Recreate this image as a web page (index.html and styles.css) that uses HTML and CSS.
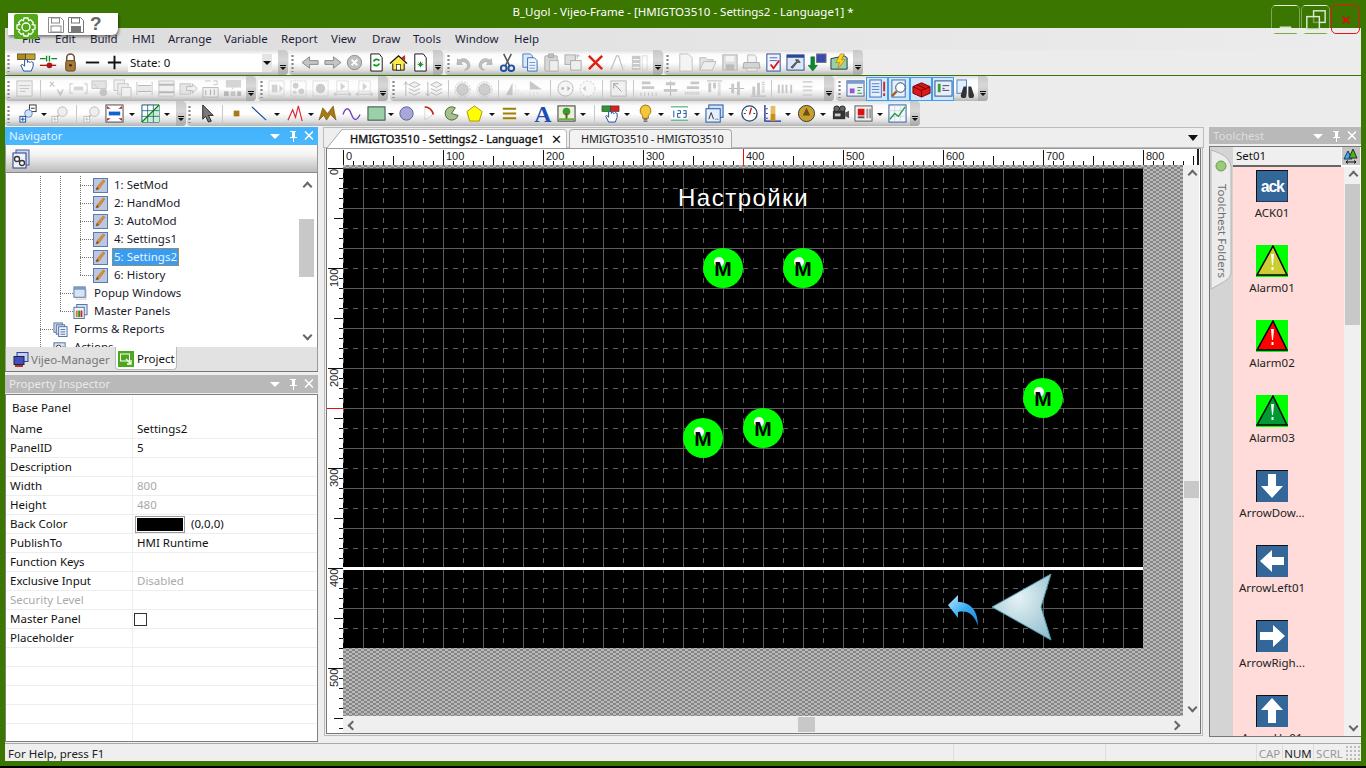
FILE: index.html
```html
<!DOCTYPE html>
<html lang="en">
<head>
<meta charset="utf-8">
<title>B_Ugol - Vijeo-Frame</title>
<link rel="stylesheet" href="styles.css">
</head>
<body>
<svg class="defs" aria-hidden="true">
<defs>
<symbol id="phi" viewBox="0 0 48 14"><path d="M5 5h10l-5 5z" fill="#fff"/><path d="M25 2h6v1h-1v5h2v1h-3v4h-1V9h-3V8h2V3h-2z" fill="#fff"/><path d="M40 2.500l8 8M48 2.500l-8 8" stroke="#fff" stroke-width="1.500"/></symbol>
<symbol id="hand" viewBox="0 0 20 20"><rect x="0" y="1" width="9" height="6" fill="#b08a18" stroke="#333" stroke-width=".7"/><rect x="9" y="1" width="10" height="6" fill="#c8a028" stroke="#333" stroke-width=".7"/><path d="M8 7v7L6 12l-2 1 3 6h8l2-5v-4l-2-1-1 1-2-1-1 1V7z" fill="#fff" stroke="#1c4f9c"/></symbol>
<symbol id="sw" viewBox="0 0 20 20"><path d="M1 6h6M13 6h6M8 3v6M11 3v6" stroke="#0a8a20" stroke-width="1.400" fill="none"/><path d="M1 13h17" stroke="#b01414" stroke-width="1.400"/><circle cx="11" cy="13" r="3" fill="#b01414"/></symbol>
<symbol id="lock" viewBox="0 0 20 20"><path d="M6 9V5a4 4 0 018 0v4" fill="none" stroke="#6a5030" stroke-width="1.600"/><rect x="5" y="8" width="10" height="11" rx="2" fill="#a87838" stroke="#5a4020"/><circle cx="10" cy="13" r="1.500" fill="#3a2810"/></symbol>
<symbol id="minus" viewBox="0 0 20 20"><path d="M3 10h14" stroke="#111" stroke-width="2"/></symbol>
<symbol id="plus" viewBox="0 0 20 20"><path d="M3 10h14M10 3v14" stroke="#111" stroke-width="2"/></symbol>
<symbol id="al" viewBox="0 0 20 20"><path d="M1 10l8-6v4h9v4H9v4z" fill="#c4c4c4" stroke="#8a8a8a"/></symbol>
<symbol id="ar" viewBox="0 0 20 20"><path d="M19 10l-8-6v4H2v4h9v4z" fill="#c4c4c4" stroke="#8a8a8a"/></symbol>
<symbol id="xc" viewBox="0 0 20 20"><circle cx="10" cy="10" r="7.500" fill="#c0c0c0" stroke="#8a8a8a"/><path d="M7 7l6 6M13 7l-6 6" stroke="#fff" stroke-width="2"/></symbol>
<symbol id="rf" viewBox="0 0 20 20"><path d="M4 1h9l3 4v14H4z" fill="#fff" stroke="#111"/><path d="M7 9a3.500 3.500 0 016-1M13 11a3.500 3.500 0 01-6 1" fill="none" stroke="#0a9a20" stroke-width="1.800"/></symbol>
<symbol id="home" viewBox="0 0 20 20"><path d="M4 10v8h12v-8" fill="#ffe94a" stroke="#111"/><path d="M1 11l9-8 9 8" fill="#ffe94a" stroke="#111" stroke-width="1.300"/><path d="M13 5l4-3v6z" fill="#d02020"/><rect x="8" y="12" width="4" height="6" fill="#fff" stroke="#111" stroke-width=".7"/></symbol>
<symbol id="docg" viewBox="0 0 20 20"><path d="M4 1h9l3 4v14H4z" fill="#fff" stroke="#111"/><path d="M10 9v6M7 12h6M8 10l4 4M12 10l-4 4" stroke="#0a8a20"/></symbol>
<symbol id="undo" viewBox="0 0 20 20"><path d="M4 6l-1 6 6 0-2-2a5 5 0 017 2c1 3-1 5-3 6 5 0 7-4 5-8-2-5-8-5-11-2z" fill="#c0c0c0" stroke="#9a9a9a" stroke-width=".6"/></symbol>
<symbol id="redo" viewBox="0 0 20 20"><path d="M16 6l1 6-6 0 2-2a5 5 0 00-7 2c-1 3 1 5 3 6-5 0-7-4-5-8 2-5 8-5 11-2z" fill="#c0c0c0" stroke="#9a9a9a" stroke-width=".6"/></symbol>
<symbol id="cut" viewBox="0 0 20 20"><path d="M6 1l6 12M14 1L8 13" stroke="#555" stroke-width="1.600"/><circle cx="6" cy="16" r="3" fill="none" stroke="#1c4f9c" stroke-width="2"/><circle cx="14" cy="16" r="3" fill="none" stroke="#1c4f9c" stroke-width="2"/></symbol>
<symbol id="copy" viewBox="0 0 20 20"><path d="M3 1h8l2 2v12H3z" fill="#dbe8fa" stroke="#4a7ac0"/><path d="M8 5h7l3 3v11H8z" fill="#eef4ff" stroke="#3a6ab0"/><path d="M10 10h6M10 13h6M10 16h6" stroke="#6a9ad0"/></symbol>
<symbol id="paste" viewBox="0 0 20 20"><rect x="3" y="3" width="13" height="16" rx="1" fill="#d8d8d8" stroke="#aaa"/><rect x="7" y="1" width="5" height="4" fill="#c0c0c0" stroke="#aaa"/><rect x="8" y="8" width="9" height="11" fill="#eee" stroke="#b4b4b4"/></symbol>
<symbol id="dup" viewBox="0 0 20 20"><rect x="1" y="2" width="11" height="10" fill="#ddd" stroke="#aaa"/><rect x="7" y="8" width="11" height="10" fill="#eee" stroke="#aaa"/><path d="M14 1v5M12 3h5" stroke="#bbb"/></symbol>
<symbol id="xr" viewBox="0 0 20 20"><path d="M3 3l14 14M17 3L3 17" stroke="#e02010" stroke-width="2.600"/></symbol>
<symbol id="af" viewBox="0 0 20 20"><path d="M3 18L9 3h2l5 15" fill="none" stroke="#c4c4c4" stroke-width="1.400"/><path d="M13 18h5M15 14h3" stroke="#ccc" stroke-dasharray="1 1"/></symbol>
<symbol id="gd" viewBox="0 0 20 20"><path d="M2 3h9v15H2z" fill="#c8c8c8"/><path d="M3 7h7M3 11h7M3 15h7" stroke="#fff"/><path d="M13 3h5v15h-5z" fill="none" stroke="#bbb" stroke-dasharray="1 1"/></symbol>
<symbol id="doc" viewBox="0 0 20 20"><path d="M4 1h9l4 4v14H4z" fill="#f4f4f4" stroke="#c0c0c0"/></symbol>
<symbol id="open" viewBox="0 0 20 20"><path d="M2 18V5h6l2 2h6v3" fill="#e4e4e4" stroke="#bbb"/><path d="M2 18l4-9h13l-4 9z" fill="#eee" stroke="#bbb"/></symbol>
<symbol id="save" viewBox="0 0 20 20"><rect x="3" y="2" width="15" height="16" fill="#ddd" stroke="#b0b0b0"/><rect x="6" y="3" width="9" height="6" fill="#f4f4f4"/><rect x="6" y="12" width="9" height="6" fill="#bbb"/></symbol>
<symbol id="prn" viewBox="0 0 20 20"><path d="M6 2h7l2 2v6H6z" fill="#f4f4f4" stroke="#bbb"/><path d="M2 10h16l1 6H1z" fill="#d4d4d4" stroke="#aaa"/><path d="M5 16h11v3H5z" fill="#eee" stroke="#bbb"/></symbol>
<symbol id="chk" viewBox="0 0 20 20"><rect x="3" y="1" width="14" height="18" fill="#eef4ff" stroke="#2a4a90"/><path d="M6 5h8M6 8h8" stroke="#4a6ab0"/><path d="M7 12l3 4 6-8" fill="none" stroke="#e01010" stroke-width="1.800"/></symbol>
<symbol id="wr" viewBox="0 0 20 20"><rect x="1" y="2" width="18" height="16" fill="#dce8f8" stroke="#2a4a90"/><rect x="1" y="2" width="18" height="3" fill="#2a4a90"/><path d="M5 15l6-6-1-2 3 0 2 3-3 0-5 6z" fill="#666" stroke="#333" stroke-width=".6"/></symbol>
<symbol id="dl" viewBox="0 0 20 20"><rect x="9" y="1" width="10" height="9" fill="#3a4ab0" stroke="#777"/><path d="M3 4h4v9h3l-5 6-5-6h3z" fill="#0a8a20" stroke="#055" stroke-width=".5"/></symbol>
<symbol id="bolt" viewBox="0 0 20 20"><path d="M1 6l14-3 3 2v12H1z" fill="#9ad0a8" stroke="#234"/><path d="M11 1L6 10h4l-2 7 8-10h-4l3-6z" fill="#ffd21a" stroke="#a07000" stroke-width=".6"/></symbol>
<symbol id="win" viewBox="0 0 20 20"><rect x="2" y="2" width="16" height="16" fill="#eee" stroke="#b4b4b4"/><path d="M4 7h12M5 10h10M5 13h6" stroke="#b4b4b4"/></symbol>
<symbol id="gray1" viewBox="0 0 20 20"><path d="M3 3l5 5M7 3L3 8M11 11l3 6 3-6M12 14h4" fill="none" stroke="#bcbcbc" stroke-width="1.400"/></symbol>
<symbol id="gray2" viewBox="0 0 20 20"><path d="M4 5H1v10h3M16 5h3v10h-3" fill="none" stroke="#bbb"/><rect x="5" y="8" width="10" height="4" fill="#ccc"/></symbol>
<symbol id="gray3" viewBox="0 0 20 20"><rect x="1" y="2" width="15" height="8" fill="#ddd" stroke="#bbb"/><path d="M3 5l5 5" stroke="#bbb"/><circle cx="13" cy="14" r="4" fill="#bbb"/></symbol>
<symbol id="gray4" viewBox="0 0 20 20"><rect x="1" y="1" width="11" height="11" fill="#eee" stroke="#bbb"/><rect x="5" y="5" width="11" height="11" fill="#e8e8e8" stroke="#bbb"/><rect x="9" y="9" width="10" height="10" fill="#f0f0f0" stroke="#bbb"/></symbol>
<symbol id="gray5" viewBox="0 0 20 20"><path d="M2 3v14M18 3v14" stroke="#bbb"/><path d="M3 7h14M3 13h14" stroke="#aaa" stroke-width="1.400"/><rect x="3" y="8" width="14" height="4" fill="#e4e4e4"/></symbol>
<symbol id="gray6" viewBox="0 0 20 20"><path d="M2 2h16v16H2z" fill="#eee" stroke="#bbb"/><path d="M2 6h16M2 14h16" stroke="#aaa" stroke-width="2"/></symbol>
<symbol id="gray7" viewBox="0 0 20 20"><path d="M1 5h11v11H1z" fill="#e0e0e0" stroke="#bbb"/><path d="M8 8h6V5l5 5-5 5v-3H8z" fill="#eee" stroke="#aaa"/></symbol>
<symbol id="gray8" viewBox="0 0 20 20"><rect x="2" y="9" width="16" height="10" fill="#eee" stroke="#aaa"/><path d="M5 12v5M14 11v6M10 11v6" stroke="#999"/><path d="M4 2h6M13 2h4v4h-4" fill="none" stroke="#bbb"/></symbol>
<symbol id="gray9" viewBox="0 0 20 20"><rect x="3" y="1" width="16" height="8" fill="#ccc"/><path d="M9 9l1 2 2-2" fill="#ccc"/><rect x="1" y="13" width="5" height="5" fill="#aaa"/><rect x="8" y="13" width="5" height="5" fill="#bbb"/><rect x="15" y="13" width="4" height="5" fill="#aaa"/></symbol>
<symbol id="dots1" viewBox="0 0 20 20"><rect x="2" y="2" width="16" height="16" fill="none" stroke="#bbb" stroke-dasharray="1 1"/><rect x="5" y="6" width="6" height="8" fill="#c8c8c8"/><path d="M13 6l4 4-4 4z" fill="#c8c8c8"/></symbol>
<symbol id="dots2" viewBox="0 0 20 20"><rect x="2" y="2" width="16" height="16" fill="none" stroke="#bbb" stroke-dasharray="1 1"/><circle cx="7" cy="7" r="3" fill="#c4c4c4"/><circle cx="13" cy="13" r="3" fill="#c4c4c4"/><circle cx="6" cy="14" r="2" fill="#ccc"/></symbol>
<symbol id="dots3" viewBox="0 0 20 20"><rect x="2" y="2" width="16" height="16" fill="none" stroke="#bbb" stroke-dasharray="1 1"/><circle cx="10" cy="10" r="5" fill="#bfbfbf"/></symbol>
<symbol id="dots4" viewBox="0 0 20 20"><rect x="4" y="2" width="12" height="11" fill="none" stroke="#bbb" stroke-dasharray="1 1"/><path d="M8 4l5 4-5 4z" fill="#c8c8c8"/><path d="M1 16h18M1 16l3-2M1 16l3 2M19 16l-3-2M19 16l-3 2" stroke="#bbb" fill="none"/></symbol>
<symbol id="layu" viewBox="0 0 20 20"><path d="M3 18V3M1 6l2-3 2 3" stroke="#aaa" fill="none"/><path d="M12 3l6 3-6 3-6-3zM6 10l6 3 6-3M6 14l6 3 6-3" stroke="#aaa" fill="#eee"/></symbol>
<symbol id="layd" viewBox="0 0 20 20"><path d="M3 3v15M1 15l2 3 2-3" stroke="#aaa" fill="none"/><path d="M12 3l6 3-6 3-6-3zM6 10l6 3 6-3M6 14l6 3 6-3" stroke="#aaa" fill="#eee"/></symbol>
<symbol id="rotl" viewBox="0 0 20 20"><circle cx="10" cy="11" r="6" fill="#c4c4c4" stroke="#aaa"/><circle cx="10" cy="11" r="8" fill="none" stroke="#bbb" stroke-dasharray="2 1"/></symbol>
<symbol id="tri" viewBox="0 0 20 20"><path d="M9 4v13H2z" fill="#bbb"/><path d="M12 6v11M15 11v6M18 15v2" stroke="#ccc" stroke-dasharray="1 1"/></symbol>
<symbol id="trf" viewBox="0 0 20 20"><path d="M4 2l13 9H4z" fill="#bbb"/><path d="M4 13v6M8 13v6M12 13v4" stroke="#ccc" stroke-dasharray="1 1"/></symbol>
<symbol id="cc" viewBox="0 0 20 20"><circle cx="10" cy="10" r="8" fill="#f4f4f4" stroke="#aaa"/><circle cx="7" cy="10" r="1.500" fill="#aaa"/><path d="M12 7l3 3-3 3" fill="#aaa"/></symbol>
<symbol id="ccd" viewBox="0 0 20 20"><circle cx="10" cy="10" r="8" fill="#f8f8f8" stroke="#bbb" stroke-dasharray="2 2"/><path d="M8 7l-3 3 3 3" fill="#bbb"/></symbol>
<symbol id="resz" viewBox="0 0 20 20"><rect x="2" y="2" width="16" height="16" fill="#eee" stroke="#aaa"/><path d="M5 5l8 8M5 5h5M5 5v5" stroke="#888" fill="none"/></symbol>
<symbol id="alg" viewBox="0 0 20 20"><path d="M3 4h9M3 9h13" stroke="#bbb" stroke-width="3"/><path d="M2 14v4M6 14v4M10 14v4M14 14v4M18 14v4" stroke="#bbb"/></symbol>
<symbol id="alc" viewBox="0 0 20 20"><path d="M10 2v16" stroke="#aaa"/><path d="M5 5h10M3 12h14" stroke="#bbb" stroke-width="3"/></symbol>
<symbol id="alr" viewBox="0 0 20 20"><path d="M8 4h9M4 9h13" stroke="#bbb" stroke-width="3"/><path d="M2 15h16" stroke="#bbb" stroke-dasharray="1 1" stroke-width="3"/></symbol>
<symbol id="alt" viewBox="0 0 20 20"><path d="M2 2h16" stroke="#aaa"/><path d="M5 4v10M10 4v6" stroke="#bbb" stroke-width="3"/><path d="M15 4v14" stroke="#bbb" stroke-dasharray="1 1" stroke-width="3"/></symbol>
<symbol id="alm" viewBox="0 0 20 20"><path d="M2 10h16" stroke="#aaa"/><path d="M6 5v10M12 3v14" stroke="#bbb" stroke-width="3"/></symbol>
<symbol id="alb" viewBox="0 0 20 20"><path d="M2 18h16" stroke="#aaa"/><path d="M5 8v9M10 4v13" stroke="#bbb" stroke-width="3"/><path d="M15 3v12" stroke="#bbb" stroke-dasharray="1 1" stroke-width="3"/></symbol>
<symbol id="sph" viewBox="0 0 20 20"><path d="M3 6v9M7 6v9M11 6v9M16 6v9" stroke="#bbb" stroke-width="2"/></symbol>
<symbol id="spv" viewBox="0 0 20 20"><path d="M5 3h10M5 8h10M5 12h10M5 17h10" stroke="#ccc" stroke-width="2"/></symbol>
<symbol id="cols" viewBox="0 0 20 20"><rect x="1" y="2" width="18" height="16" fill="#eef3fb" stroke="#3a5a9a"/><rect x="1" y="2" width="18" height="3" fill="#7a9ad0"/><rect x="4" y="10" width="5" height="5" fill="#a050d0"/><path d="M12 9h5M12 12h3M12 15h5" stroke="#2a9a30"/></symbol>
<symbol id="lst" viewBox="0 0 20 20"><rect x="2" y="1" width="12" height="18" fill="#e4efff" stroke="#3a6ab0"/><path d="M4 5h8M4 8h8M4 11h8M4 14h8" stroke="#4a80c8"/><path d="M17 3v10M17 15v3" stroke="#e02020" stroke-width="2"/></symbol>
<symbol id="glass" viewBox="0 0 20 20"><rect x="2" y="1" width="14" height="18" fill="#e4efff" stroke="#3a6ab0"/><circle cx="11" cy="9" r="5" fill="#fff" stroke="#246"/><path d="M7 13l-5 5" stroke="#a06020" stroke-width="2.500"/></symbol>
<symbol id="redbox" viewBox="0 0 20 20"><path d="M1 8l9-4 9 4v7l-9 4-9-4z" fill="#d81a1a" stroke="#700"/><path d="M1 8l9 4 9-4M10 12v7M5 6l9 4" stroke="#700" fill="none"/></symbol>
<symbol id="panel" viewBox="0 0 20 20"><rect x="1" y="2" width="18" height="16" fill="#e8f0ff" stroke="#2a4a7a"/><path d="M4 5h3v9H4z" fill="#38a030"/><path d="M9 7h7M9 12h7" stroke="#444"/><path d="M9 9l3 1-3 1z" fill="#a030c0"/></symbol>
<symbol id="bino" viewBox="0 0 20 20"><rect x="1" y="1" width="10" height="14" fill="#e4efff" stroke="#4a7ac0"/><path d="M8 8h3v9a3 3 0 01-6 0zM13 8h3l3 9a3 3 0 01-6 0z" fill="#333"/></symbol>
<symbol id="zin" viewBox="0 0 20 20"><rect x="11" y="1" width="7" height="7" fill="#fff" stroke="#333"/><path d="M12.500 4.500h4" stroke="#333"/><circle cx="10" cy="10" r="4" fill="#cfe4ff" stroke="#5a86c0"/><path d="M7 13l-2 2" stroke="#d09030" stroke-width="2"/><rect x="1" y="13" width="6" height="6" fill="#fff" stroke="#1c4f9c"/><path d="M2 16h4M4 14v4" stroke="#1c4f9c"/></symbol>
<symbol id="zin2" viewBox="0 0 20 20"><circle cx="12" cy="8" r="5" fill="#eee" stroke="#bbb"/><path d="M8 12l-2 2" stroke="#bbb" stroke-width="2"/><rect x="1" y="13" width="6" height="6" fill="#fff" stroke="#bbb"/><path d="M2 16h4M4 14v4" stroke="#bbb"/></symbol>
<symbol id="fit" viewBox="0 0 20 20"><rect x="1" y="1" width="18" height="18" fill="#fff" stroke="#444"/><path d="M2 2l4 3H2zM18 2l-4 3h4zM2 18l4-3H2zM18 18l-4-3h4z" fill="#c02020"/><rect x="4" y="8" width="12" height="4" fill="#1060d0"/></symbol>
<symbol id="grd" viewBox="0 0 20 20"><path d="M1 1h18v18H1z" fill="#fff" stroke="#156"/><path d="M1 19L19 1L19 19z" fill="#c8f0d0"/><path d="M7 1v18M13 1v18M1 7h18M1 13h18" stroke="#157" stroke-width=".8"/><path d="M1 19L19 1" stroke="#080" stroke-width="1.300"/></symbol>
<symbol id="ptr" viewBox="0 0 20 20"><path d="M5 1l11 11h-5l3 6-3 1-3-6-3 3z" fill="#7a7a7a" stroke="#222"/></symbol>
<symbol id="ptt" viewBox="0 0 20 20"><rect x="6" y="7" width="6" height="6" fill="#a87818"/></symbol>
<symbol id="lin" viewBox="0 0 20 20"><path d="M2 3l15 14" stroke="#1c4f9c" stroke-width="1.300"/></symbol>
<symbol id="pln" viewBox="0 0 20 20"><path d="M2 17l5-11 3 8 3-12 4 16" fill="none" stroke="#e02030" stroke-width="1.200"/></symbol>
<symbol id="mm" viewBox="0 0 20 20"><path d="M1 17L5 4l5 6 6-8 3 15-6-6-4 6-3-5z" fill="#a47a12" stroke="#6a4a08" stroke-width=".6"/></symbol>
<symbol id="wav" viewBox="0 0 20 20"><path d="M1 11c3-8 6-8 9 0s6 6 9 0" fill="none" stroke="#7040c0" stroke-width="1.400"/></symbol>
<symbol id="rct" viewBox="0 0 20 20"><rect x="1" y="3" width="18" height="14" fill="#9ad0a8"/><rect x="1" y="3" width="18" height="14" fill="none" stroke="#344"/></symbol>
<symbol id="ell" viewBox="0 0 20 20"><circle cx="10" cy="10" r="7" fill="#a8a8d8" stroke="#5a5a98"/></symbol>
<symbol id="arc" viewBox="0 0 20 20"><path d="M5 3a10 10 0 019 8" fill="none" stroke="#d02020" stroke-width="2"/><path d="M5 3v14l9-6" fill="none" stroke="#bbb" stroke-dasharray="1 1"/></symbol>
<symbol id="pie" viewBox="0 0 20 20"><path d="M10 10l7 2a7 7 0 11-3-8z" fill="#a8c090" stroke="#4a6a30"/></symbol>
<symbol id="pent" viewBox="0 0 20 20"><path d="M10 2l8 6-3 10H5L2 8z" fill="#ffff00" stroke="#b09000"/></symbol>
<symbol id="lns" viewBox="0 0 20 20"><path d="M3 5h14M3 10h14M3 15h14" stroke="#a08000" stroke-width="2"/></symbol>
<symbol id="img" viewBox="0 0 20 20"><rect x="1" y="2" width="18" height="16" fill="#e8f0d8" stroke="#333"/><circle cx="10" cy="8" r="4" fill="#3a9a30"/><path d="M10 10v6" stroke="#804010" stroke-width="2"/><path d="M2 16h16" stroke="#6ab040" stroke-width="2"/></symbol>
<symbol id="hnd2" viewBox="0 0 20 20"><rect x="1" y="2" width="9" height="6" fill="#2a9a30" stroke="#333" stroke-width=".6"/><rect x="10" y="2" width="9" height="6" fill="#d82020" stroke="#333" stroke-width=".6"/><path d="M8 8v6l-2-2-1 1 3 6h7l2-5v-4l-2-1-1 1-2-1-1 1V8z" fill="#fff" stroke="#1c4f9c"/></symbol>
<symbol id="bulb" viewBox="0 0 20 20"><path d="M10 1a6 6 0 00-3 11v3h6v-3a6 6 0 00-3-11z" fill="#f4c83a" stroke="#a07010"/><path d="M8 16h4M8 18h4" stroke="#555" stroke-width="1.300"/></symbol>
<symbol id="n123" viewBox="0 0 20 20"><rect x="1" y="3" width="18" height="14" fill="#fff"/><path d="M1 3h18M1 17h18" stroke="#1aa060"/><path d="M4 7v7M8 7h3v3H8v4h3M14 7h3v7h-3M14 10h3" stroke="#1c4f9c" fill="none"/></symbol>
<symbol id="txb" viewBox="0 0 20 20"><rect x="4" y="1" width="15" height="13" fill="#cce0f8" stroke="#1c4f9c"/><rect x="1" y="5" width="15" height="14" fill="#e4f0fc" stroke="#1c4f9c"/><path d="M4 16l2.500-7 2.500 7" fill="none" stroke="#333"/><path d="M11 16h3" stroke="#333" stroke-dasharray="1 1"/></symbol>
<symbol id="gau" viewBox="0 0 20 20"><circle cx="10" cy="10" r="8" fill="#fff" stroke="#2a4a7a" stroke-width="1.400"/><path d="M10 11l2-7" stroke="#c02020" stroke-width="1.400"/><path d="M4 10h2M14 10h2M6 6l1 1" stroke="#333"/></symbol>
<symbol id="bar" viewBox="0 0 20 20"><path d="M2 1v17h17" fill="none" stroke="#1c2f9c" stroke-width="1.400"/><rect x="8" y="2" width="5" height="8" fill="#e0c060"/><rect x="8" y="10" width="5" height="8" fill="#c89018"/><path d="M3 5h2M3 10h2M3 15h2" stroke="#1c2f9c"/></symbol>
<symbol id="knb" viewBox="0 0 20 20"><circle cx="10" cy="10" r="8.500" fill="#c8a030" stroke="#333"/><path d="M10 4l4 8H6z" fill="#6a5010"/></symbol>
<symbol id="cam" viewBox="0 0 20 20"><rect x="2" y="7" width="13" height="9" fill="#333"/><circle cx="6" cy="5" r="3" fill="#666" stroke="#222"/><circle cx="12" cy="5" r="3" fill="#666" stroke="#222"/><path d="M15 9l4-2v8l-4-2z" fill="#555"/><rect x="4" y="10" width="6" height="3" fill="#ccc"/></symbol>
<symbol id="alrm" viewBox="0 0 20 20"><rect x="1" y="2" width="18" height="16" fill="#eee" stroke="#555"/><rect x="4" y="5" width="7" height="7" fill="#e01010"/><path d="M4 14h7" stroke="#555" stroke-width="2"/><path d="M14 5v10M17 5v10" stroke="#999" stroke-width="2"/></symbol>
<symbol id="trd" viewBox="0 0 20 20"><rect x="1" y="1" width="18" height="18" fill="#f4f8ff" stroke="#2a5a9a"/><path d="M1 7h18M1 13h18M7 1v18M13 1v18" stroke="#ccc" stroke-width=".7"/><path d="M2 16l5-6 4 3 7-10" fill="none" stroke="#20a040" stroke-width="1.400"/></symbol>
<symbol id="pg" viewBox="0 0 15 15"><rect x=".5" y=".5" width="14" height="14" fill="#bcc8e0" stroke="#5a7ab0"/><path d="M3 12l3-1 6-8-2-1-6 7z" fill="#e09030" stroke="#8a5a30" stroke-width=".4"/><path d="M3 12l1-3 2 2z" fill="#705030"/></symbol>
<symbol id="pop" viewBox="0 0 16 16"><rect x="1" y="1" width="12" height="11" fill="#d8e4f4" stroke="#5070a0"/><rect x="1" y="1" width="12" height="3" fill="#7a98c8"/><path d="M14 4v10H3" fill="none" stroke="#999" stroke-dasharray="1 1"/></symbol>
<symbol id="mst" viewBox="0 0 16 16"><rect x="4" y="0.500" width="11" height="11" fill="#d8e4f4" stroke="#5070a0"/><rect x="1" y="3.500" width="11" height="12" fill="#eef3fb" stroke="#5070a0"/><rect x="3" y="7" width="2" height="7" fill="#d08020"/><rect x="5.500" y="7" width="2" height="7" fill="#38902c"/><rect x="8" y="7" width="2" height="7" fill="#c03020"/></symbol>
<symbol id="frm" viewBox="0 0 16 16"><rect x="1" y="1" width="9" height="10" fill="#d8e4f4" stroke="#5070a0"/><rect x="3.500" y="3" width="9" height="10" fill="#d8e4f4" stroke="#5070a0"/><rect x="6" y="5" width="9" height="10.500" fill="#eef3fb" stroke="#5070a0"/><path d="M8 8h5M8 10.500h5M8 13h5" stroke="#5070a0"/></symbol>
<symbol id="act" viewBox="0 0 16 16"><rect x="1" y="3" width="12" height="12" fill="#d8e4f4" stroke="#5070a0"/><circle cx="6" cy="8" r="2.500" fill="#fff" stroke="#333"/><circle cx="11" cy="10" r="2.500" fill="#fff" stroke="#333"/></symbol>
<symbol id="mgr" viewBox="0 0 16 16"><rect x="4" y="0.500" width="11" height="9" fill="#c4d0f0" stroke="#3040a0"/><rect x="1" y="4.500" width="10" height="8" fill="#4050c0" stroke="#223"/><rect x="2" y="13" width="8" height="2" fill="#b03030"/></symbol>
<symbol id="prj" viewBox="0 0 16 16"><rect x="0" y="0" width="16" height="16" fill="#4ca81c"/><rect x="2" y="2.500" width="10" height="8" fill="#fff"/><rect x="3" y="3.500" width="8" height="6" fill="#4ca81c"/><path d="M8 8l5 5M13 9v4H9" fill="none" stroke="#fff" stroke-width="1.300"/></symbol>
<symbol id="gears" viewBox="0 0 20 20"><rect x="5" y="1" width="13" height="15" fill="#cfd8f0" stroke="#4a5a9a"/><rect x="2" y="4" width="13" height="15" fill="#eef2fc" stroke="#2a3a7a"/><circle cx="6" cy="10" r="2.500" fill="#fff" stroke="#333" stroke-width="1.300"/><circle cx="11" cy="14" r="2.500" fill="#fff" stroke="#333" stroke-width="1.300"/></symbol>
<symbol id="fsz" viewBox="0 0 16 16"><path d="M1 11L5 3l4 8z" fill="#35b0e8" stroke="#236"/><path d="M6 10l4-9 4 9z" fill="#50b020" stroke="#232"/><path d="M3 14h10M3 14l2-1.500M3 14l2 1.500M13 14l-2-1.500M13 14l-2 1.500" stroke="#111" fill="none"/></symbol>
</defs>
</svg>

<div class="win">
  <header class="title">
    <span class="title-text">B_Ugol - Vijeo-Frame - [HMIGTO3510 - Settings2 - Language1] *</span>
    <div class="caps">
      <span class="cap"><svg width="27" height="27" viewBox="0 0 28 28"><path d="M8 22h12" stroke="#dfe8d8" stroke-width="1.500"/></svg></span>
      <span class="cap"><svg width="27" height="27" viewBox="0 0 28 28"><rect x="12" y="5" width="12" height="12" fill="none" stroke="#dfe8d8" stroke-width="1.500"/><rect x="5" y="11" width="13" height="13" fill="#3a7600" fill-opacity=".6" stroke="#dfe8d8" stroke-width="1.500"/></svg></span>
      <span class="cap cap-x"><svg width="27" height="27" viewBox="0 0 28 28"><path d="M11 11l7 7M18 11l-7 7" stroke="#d81010" stroke-width="2"/></svg></span>
    </div>
  </header>

  <div class="qat">
    <span class="qat-gear"><svg width="24" height="24" viewBox="0 0 24 24"><path d="M10 3h4l.6 2.600 2-.9 2.800 2.800-1.100 2 2.700.6v4l-2.700.6 1.100 2-2.800 2.800-2-1.100L14 21h-4l-.6-2.600-2 1.100-2.800-2.800 1.100-2L3 14.100v-4l2.700-.6-1.100-2 2.800-2.800 2 .9z" fill="none" stroke="#fff" stroke-width="1.300"/><circle cx="12" cy="12" r="4" fill="none" stroke="#fff" stroke-width="1.300"/></svg></span>
    <svg class="qat-i" width="18" height="18" viewBox="0 0 18 18"><path d="M1.500 1.500h12l3 3v12h-15z" fill="#fff" stroke="#8a8a8a"/><rect x="4.500" y="2" width="8" height="5" fill="none" stroke="#8a8a8a"/><rect x="4" y="10" width="10" height="6" fill="none" stroke="#8a8a8a"/></svg>
    <svg class="qat-i" width="18" height="18" viewBox="0 0 18 18"><path d="M1.500 1.500h12l3 3v12h-15z" fill="#fff" stroke="#777"/><rect x="4.500" y="2" width="8" height="5" fill="none" stroke="#777"/><rect x="4" y="10" width="10" height="6.500" fill="#777"/></svg>
    <span class="qat-help">?</span>
  </div>

  <nav class="menu">
    <span>File</span><span>Edit</span><span>Build</span><span>HMI</span><span>Arrange</span><span>Variable</span><span>Report</span><span>View</span><span>Draw</span><span>Tools</span><span>Window</span><span>Help</span>
  </nav>

  <div class="tbrow r1">
    <div class="tbar t11"><i class="grip"></i>
      <i class="b"><svg><use href="#hand"/></svg></i><i class="b"><svg><use href="#sw"/></svg></i><i class="b"><svg><use href="#lock"/></svg></i><i class="b"><svg><use href="#minus"/></svg></i><i class="b"><svg><use href="#plus"/></svg></i>
      <div class="combo"><span>State: 0</span><i class="combo-btn"></i></div>
      <i class="end"></i></div>
    <div class="tbar t12"><i class="grip"></i>
      <i class="b"><svg><use href="#al"/></svg></i><i class="b"><svg><use href="#ar"/></svg></i><i class="b"><svg><use href="#xc"/></svg></i><i class="b"><svg><use href="#rf"/></svg></i><i class="b"><svg><use href="#home"/></svg></i><i class="b"><svg><use href="#docg"/></svg></i>
      <i class="end"></i></div>
    <div class="tbar t13"><i class="grip g7"></i>
      <i class="b"><svg><use href="#undo"/></svg></i><i class="b"><svg><use href="#redo"/></svg></i><i class="b"><svg><use href="#cut"/></svg></i><i class="b"><svg><use href="#copy"/></svg></i><i class="b"><svg><use href="#paste"/></svg></i><i class="b"><svg><use href="#dup"/></svg></i><i class="b"><svg><use href="#xr"/></svg></i><i class="b"><svg><use href="#af"/></svg></i><i class="b"><svg><use href="#gd"/></svg></i>
      <i class="end"></i></div>
    <div class="tbar t14"><i class="grip"></i>
      <i class="b"><svg><use href="#doc"/></svg></i><i class="b"><svg><use href="#open"/></svg></i><i class="b"><svg><use href="#save"/></svg></i><i class="b"><svg><use href="#prn"/></svg></i><i class="b"><svg><use href="#chk"/></svg></i><i class="b"><svg><use href="#wr"/></svg></i><i class="b"><svg><use href="#dl"/></svg></i><i class="b"><svg><use href="#bolt"/></svg></i>
      <i class="end"></i></div>
  </div>

  <div class="tbrow r2">
    <div class="tbar t21 faded"><i class="grip g8"></i>
      <i class="b"><svg><use href="#win"/></svg></i><i class="sep w10"></i><i class="b"><svg><use href="#gray1"/></svg></i><i class="b"><svg><use href="#gray2"/></svg></i><i class="b"><svg><use href="#gray3"/></svg></i><i class="b"><svg><use href="#gray4"/></svg></i><i class="b"><svg><use href="#gray5"/></svg></i><i class="b"><svg><use href="#gray6"/></svg></i><i class="b"><svg><use href="#gray7"/></svg></i><i class="b"><svg><use href="#gray8"/></svg></i><i class="b"><svg><use href="#gray9"/></svg></i>
      <i class="end"></i></div>
    <div class="tbar t22 faded"><i class="grip g7"></i>
      <i class="b"><svg><use href="#dots1"/></svg></i><i class="b"><svg><use href="#dots2"/></svg></i><i class="b"><svg><use href="#dots3"/></svg></i><i class="b"><svg><use href="#dots4"/></svg></i><i class="b"><svg><use href="#dots4"/></svg></i>
      <i class="end"></i></div>
    <div class="tbar t23 faded"><i class="grip g11"></i>
      <i class="b"><svg><use href="#layu"/></svg></i><i class="b"><svg><use href="#layd"/></svg></i><i class="sep w6"></i><i class="b"><svg><use href="#rotl"/></svg></i><i class="b"><svg><use href="#rotl"/></svg></i><i class="sep w7"></i><i class="b"><svg><use href="#tri"/></svg></i><i class="b"><svg><use href="#trf"/></svg></i><i class="sep w8"></i><i class="b"><svg><use href="#cc"/></svg></i><i class="b"><svg><use href="#ccd"/></svg></i><i class="sep w9"></i><i class="b"><svg><use href="#resz"/></svg></i><i class="sep w8"></i><i class="b"><svg><use href="#alg"/></svg></i><i class="b"><svg><use href="#alc"/></svg></i><i class="b"><svg><use href="#alr"/></svg></i><i class="b"><svg><use href="#alt"/></svg></i><i class="b"><svg><use href="#alm"/></svg></i><i class="b"><svg><use href="#alb"/></svg></i><i class="sep w5"></i><i class="b"><svg><use href="#sph"/></svg></i><i class="b"><svg><use href="#spv"/></svg></i>
      <i class="end"></i></div>
    <div class="tbar t24"><i class="grip g8"></i>
      <i class="b"><svg><use href="#cols"/></svg></i><i class="b on"><svg><use href="#lst"/></svg></i><i class="b on"><svg><use href="#glass"/></svg></i><i class="b on"><svg><use href="#redbox"/></svg></i><i class="b on"><svg><use href="#panel"/></svg></i><i class="b"><svg><use href="#bino"/></svg></i>
      <i class="end"></i></div>
  </div>

  <div class="tbrow r3">
    <div class="tbar t31"><i class="grip g12"></i>
      <i class="b"><svg><use href="#zin"/></svg></i><i class="dr w10"></i><i class="b"><svg><use href="#zin2"/></svg></i><i class="sep w10"></i><i class="b"><svg><use href="#zin2"/></svg></i><i class="b"><svg><use href="#fit"/></svg></i><i class="dr w14"></i><i class="b"><svg><use href="#grd"/></svg></i><i class="dr w12"></i>
      <i class="end"></i></div>
    <div class="tbar t32"><i class="grip g9"></i>
      <i class="b"><svg><use href="#ptr"/></svg></i><i class="sep w8"></i><i class="b"><svg><use href="#ptt"/></svg></i><i class="b"><svg><use href="#lin"/></svg></i><i class="dr w14"></i><i class="b"><svg><use href="#pln"/></svg></i><i class="dr w10"></i><i class="b"><svg><use href="#mm"/></svg></i><i class="b w27"><svg><use href="#wav"/></svg></i><i class="b"><svg><use href="#rct"/></svg></i><i class="dr w8"></i><i class="b"><svg><use href="#ell"/></svg></i><i class="b w24"><svg><use href="#arc"/></svg></i><i class="b w20"><svg><use href="#pie"/></svg></i><i class="b w26"><svg><use href="#pent"/></svg></i><i class="dr w10"></i><i class="b w25"><svg><use href="#lns"/></svg></i><i class="dr w10"></i><i class="b"><span class="big-a">A</span></i><i class="b w24"><svg><use href="#img"/></svg></i><i class="dr w10"></i><i class="sep w12"></i><i class="b w20"><svg><use href="#hnd2"/></svg></i><i class="dr w14"></i><i class="b"><svg><use href="#bulb"/></svg></i><i class="dr w10"></i><i class="b w26"><svg><use href="#n123"/></svg></i><i class="dr w10"></i><i class="b w24"><svg><use href="#txb"/></svg></i><i class="dr w10"></i><i class="b w26"><svg><use href="#gau"/></svg></i><i class="b w20"><svg><use href="#bar"/></svg></i><i class="dr w12"></i><i class="b w24"><svg><use href="#knb"/></svg></i><i class="dr w10"></i><i class="b w24"><svg><use href="#cam"/></svg></i><i class="b"><svg><use href="#alrm"/></svg></i><i class="dr w12"></i><i class="b"><svg><use href="#trd"/></svg></i>
      <i class="end"></i></div>
  </div>

  <main class="main">
    <div class="leftcol">
      <section class="pane nav-pane">
        <div class="ph ph-on"><span>Navigator</span><svg class="ph-ic"><use href="#phi"/></svg></div>
        <div class="nav-tools"><svg width="20" height="20"><use href="#gears"/></svg></div>
        <div class="tree">
          <div class="tree-body">
            <div class="tn"><i class="g"></i><i class="g"></i><i class="h"></i><svg class="ti"><use href="#pg"/></svg><span>1: SetMod</span></div>
            <div class="tn"><i class="g"></i><i class="g"></i><i class="h"></i><svg class="ti"><use href="#pg"/></svg><span>2: HandMod</span></div>
            <div class="tn"><i class="g"></i><i class="g"></i><i class="h"></i><svg class="ti"><use href="#pg"/></svg><span>3: AutoMod</span></div>
            <div class="tn"><i class="g"></i><i class="g"></i><i class="h"></i><svg class="ti"><use href="#pg"/></svg><span>4: Settings1</span></div>
            <div class="tn"><i class="g"></i><i class="g"></i><i class="h"></i><svg class="ti"><use href="#pg"/></svg><span class="sel">5: Settings2</span></div>
            <div class="tn"><i class="g"></i><i class="g"></i><i class="h h-end"></i><svg class="ti"><use href="#pg"/></svg><span>6: History</span></div>
            <div class="tn"><i class="g"></i><i class="h"></i><svg class="ti"><use href="#pop"/></svg><span>Popup Windows</span></div>
            <div class="tn"><i class="g"></i><i class="h h-end"></i><svg class="ti"><use href="#mst"/></svg><span>Master Panels</span></div>
            <div class="tn"><i class="h"></i><svg class="ti"><use href="#frm"/></svg><span>Forms &amp; Reports</span></div>
            <div class="tn"><i class="h"></i><svg class="ti"><use href="#act"/></svg><span>Actions</span></div>
          </div>
          <div class="sb-v tree-sb"><i class="chev up"></i><i class="thumb"></i><i class="chev dn"></i></div>
        </div>
        <div class="btabs">
          <span class="btab"><svg width="16" height="16"><use href="#mgr"/></svg>Vijeo-Manager</span>
          <span class="btab btab-on"><svg width="16" height="16"><use href="#prj"/></svg>Project</span>
        </div>
      </section>

      <section class="pane prop-pane">
        <div class="ph"><span>Property Inspector</span><svg class="ph-ic"><use href="#phi"/></svg></div>
        <div class="props">
          <div class="pr pr-head"><span>Base Panel</span><span></span></div>
          <div class="pr"><span>Name</span><span>Settings2</span></div>
          <div class="pr"><span>PanelID</span><span>5</span></div>
          <div class="pr"><span>Description</span><span></span></div>
          <div class="pr"><span>Width</span><span class="dim">800</span></div>
          <div class="pr"><span>Height</span><span class="dim">480</span></div>
          <div class="pr"><span>Back Color</span><span class="colorv"><i class="swatch"></i>(0,0,0)</span></div>
          <div class="pr"><span>PublishTo</span><span>HMI Runtime</span></div>
          <div class="pr"><span>Function Keys</span><span></span></div>
          <div class="pr"><span>Exclusive Input</span><span class="dim">Disabled</span></div>
          <div class="pr"><span class="dim">Security Level</span><span></span></div>
          <div class="pr"><span>Master Panel</span><span class="checkv"><i class="check"></i></span></div>
          <div class="pr"><span>Placeholder</span><span></span></div>
          <div class="pr"><span></span><span></span></div>
          <div class="pr"><span></span><span></span></div>
          <div class="pr"><span></span><span></span></div>
          <div class="pr"><span></span><span></span></div>
          <div class="pr"><span></span><span></span></div>
        </div>
      </section>
    </div>

    <section class="center">
      <div class="dtabs">
        <div class="dtab dtab-on">
          <svg class="slant" width="16" height="19" viewBox="0 0 16 19"><path d="M0 19L15 .5H16V19z" fill="#fff"/><path d="M0 19L15 .5h1" fill="none" stroke="#aaa"/></svg>
          <span class="dtab-t"><span>HMIGTO3510 - Settings2 - Language1</span><b class="dtab-x">✕</b></span>
        </div>
        <div class="dtab dtab-off"><span class="dtab-t">HMIGTO3510 - HMIGTO3510</span></div>
        <i class="dtab-menu"></i>
      </div>
      <div class="doc">
        <div class="doc-row">
          <i class="corner"></i>
          <svg class="ruler-h" width="856" height="17" viewBox="0 0 856 17">
            <defs>
              <pattern id="rt" width="100" height="17" patternUnits="userSpaceOnUse"><path d="M.5 1v15" stroke="#111"/><path d="M10.500 12v4M20.500 12v4M30.500 12v4M40.500 12v4M60.500 12v4M70.500 12v4M80.500 12v4M90.500 12v4M50.500 7v9" stroke="#111"/></pattern>
            </defs>
            <rect width="856" height="17" fill="url(#rt)"/>
            <path d="M400.500 0v16" stroke="#e01010"/>
            <rect x="854" y="0" width="2" height="17" fill="#222"/>
            <g class="rlabel"><text x="3" y="11">0</text><text x="103" y="11">100</text><text x="203" y="11">200</text><text x="303" y="11">300</text><text x="403" y="11">400</text><text x="503" y="11">500</text><text x="603" y="11">600</text><text x="703" y="11">700</text><text x="803" y="11">800</text></g>
          </svg>
        </div>
        <div class="doc-body">
          <svg class="ruler-v" width="16" height="569" viewBox="0 0 16 569">
            <defs>
              <pattern id="rl" x="0" y="3" width="16" height="100" patternUnits="userSpaceOnUse"><path d="M1 .5h15" stroke="#111"/><path d="M12 10.500h4M12 20.500h4M12 30.500h4M12 40.500h4M12 60.500h4M12 70.500h4M12 80.500h4M12 90.500h4M7 50.500h9" stroke="#111"/></pattern>
            </defs>
            <rect width="16" height="569" fill="url(#rl)"/>
            <path d="M0 243.500h16" stroke="#e01010"/>
            <g class="rlabel"><text transform="translate(11 10) rotate(-90)">0</text><text transform="translate(11 122) rotate(-90)">100</text><text transform="translate(11 222) rotate(-90)">200</text><text transform="translate(11 322) rotate(-90)">300</text><text transform="translate(11 422) rotate(-90)">400</text><text transform="translate(11 522) rotate(-90)">500</text></g>
          </svg>
          <div class="view">
            <div class="scroll-row">
              <div class="hatch">
                <div class="canvas">
                  <svg class="grid" width="800" height="480" viewBox="0 0 800 480">
                    <defs>
                      <pattern id="gp" width="40" height="40" patternUnits="userSpaceOnUse">
                        <path d="M20.500 0V40" stroke="#5c5c5c"/>
                        <path d="M0 .5H40" stroke="#5c5c5c"/>
                        <path d="M0 20.500H40" stroke="#606060" stroke-dasharray="5 5"/>
                        <path d="M.5 0V40" stroke="#606060" stroke-dasharray="5 5"/>
                      </pattern>
                      <radialGradient id="shine" cx=".45" cy=".35" r=".8"><stop offset="0" stop-color="#e6f2f6"/><stop offset="1" stop-color="#8fbccb"/></radialGradient>
                      <linearGradient id="blu" x1="0" y1="0" x2="1" y2="1"><stop offset="0" stop-color="#bfe8ff"/><stop offset=".5" stop-color="#37aef2"/><stop offset="1" stop-color="#1e88d8"/></linearGradient>
                    </defs>
                    <rect width="800" height="480" fill="#000"/>
                    <rect width="800" height="480" fill="url(#gp)"/>
                    <rect x="0" y="399" width="800" height="3" fill="#fff"/>
                    <path d="M649 439L708 406l-10 33 10 33z" fill="url(#shine)" stroke="#4a9aac"/>
                    <path d="M605 437l10-10v7c10 0 20 6 20 24-4-12-10-16-20-14v6z" fill="url(#blu)"/>
                  </svg>
                  <span class="cv-title">Настройки</span>
                  <span class="motor m1">M</span>
                  <span class="motor m2">M</span>
                  <span class="motor m3">M</span>
                  <span class="motor m4">M</span>
                  <span class="motor m5">M</span>
                </div>
              </div>
              <div class="sb-v doc-sb"><i class="chev up"></i><i class="thumb"></i><i class="chev dn"></i></div>
            </div>
            <div class="sb-h"><i class="chev lf"></i><i class="thumb"></i><i class="chev rt"></i></div>
          </div>
        </div>
      </div>
    </section>

    <aside class="chest">
      <div class="ph"><span>Toolchest</span><svg class="ph-ic"><use href="#phi"/></svg></div>
      <div class="chest-body">
        <div class="folder">
          <svg class="folder-shape" width="23" height="150" viewBox="0 0 23 150"><path d="M1 3c8 3 19 6 20 17v105c0 8-10 11-20 17z" fill="#ececec" stroke="#b4b4b4"/><circle cx="11" cy="19" r="5" fill="#9acb78" stroke="#6a9a50"/></svg>
          <span class="folder-t">Toolchest Folders</span>
        </div>
        <div class="chest-main">
          <div class="set-row"><span class="set-name">Set01</span><span class="set-btn"><svg width="16" height="16"><use href="#fsz"/></svg></span></div>
          <div class="chest-list">
            <div class="items">
              <figure class="it"><svg class="ib" viewBox="0 0 32 32"><rect width="32" height="32" fill="#336699"/><path d="M.5 32V.5H32" fill="none" stroke="#111"/><path d="M0 31.500h32M31.500 0v32" stroke="#111" stroke-opacity=".5"/></svg><b class="ack">ack</b><figcaption>ACK01</figcaption></figure>
              <figure class="it"><svg class="ib" viewBox="0 0 32 32"><rect width="32" height="32" fill="#0f0"/><path d="M17 1L31 30H1z" fill="#cccc33" stroke="#000" stroke-width="1.500"/><path d="M15 9h3l-1 11h-1zM15.500 22h2v3h-2z" fill="#fff"/></svg><figcaption>Alarm01</figcaption></figure>
              <figure class="it"><svg class="ib" viewBox="0 0 32 32"><rect width="32" height="32" fill="#0f0"/><path d="M17 1L31 30H1z" fill="#f00" stroke="#000" stroke-width="1.500"/><path d="M15 9h3l-1 11h-1zM15.500 22h2v3h-2z" fill="#fff"/></svg><figcaption>Alarm02</figcaption></figure>
              <figure class="it"><svg class="ib" viewBox="0 0 32 32"><rect width="32" height="32" fill="#0f0"/><path d="M17 1L31 30H1z" fill="#009933" stroke="#000" stroke-width="1.500"/><path d="M15 9h3l-1 11h-1zM15.500 22h2v3h-2z" fill="#fff"/></svg><figcaption>Alarm03</figcaption></figure>
              <figure class="it"><svg class="ib" viewBox="0 0 32 32"><rect width="32" height="32" fill="#336699"/><path d="M.5 32V.5H32" fill="none" stroke="#111"/><path d="M12 4h8v12h7L16 28 5 16h7z" fill="#fff"/></svg><figcaption>ArrowDow...</figcaption></figure>
              <figure class="it"><svg class="ib" viewBox="0 0 32 32"><rect width="32" height="32" fill="#336699"/><path d="M.5 32V.5H32" fill="none" stroke="#111"/><path d="M4 16L16 5v7h12v8H16v7z" fill="#fff"/></svg><figcaption>ArrowLeft01</figcaption></figure>
              <figure class="it"><svg class="ib" viewBox="0 0 32 32"><rect width="32" height="32" fill="#336699"/><path d="M.5 32V.5H32" fill="none" stroke="#111"/><path d="M29 16L17 5v7H4v8h13v7z" fill="#fff"/></svg><figcaption>ArrowRigh...</figcaption></figure>
              <figure class="it"><svg class="ib" viewBox="0 0 32 32"><rect width="32" height="32" fill="#336699"/><path d="M.5 32V.5H32" fill="none" stroke="#111"/><path d="M16 3l11 12h-7v13h-8V15H5z" fill="#fff"/></svg><figcaption>ArrowUp01</figcaption></figure>
            </div>
            <div class="sb-v chest-sb"><i class="chev up"></i><i class="thumb"></i><i class="chev dn"></i></div>
          </div>
        </div>
      </div>
    </aside>
  </main>

  <footer class="status">
    <span class="st-help">For Help, press F1</span>
    <span class="st st-a"></span><span class="st st-b"></span>
    <span class="st st-off">CAP</span><span class="st st-on">NUM</span><span class="st st-off st-scrl">SCRL</span><i class="st-grip"></i>
  </footer>
</div>
</body>
</html>
```

FILE: styles.css
```css
*{box-sizing:border-box}
html,body{margin:0;padding:0}
body{width:1366px;height:768px;overflow:hidden;background:#000;font:11.500px/1.2 "Noto Sans","Open Sans",sans-serif;color:#111}
.defs{position:absolute;width:0;height:0}
i{font-style:normal;display:block}
figure{margin:0}

.win{position:relative;width:1366px;height:766px;background:#3a7600;padding:0 5px 5px;display:flex;flex-direction:column}

.title{height:28px;flex:none;color:#fff;display:flex;justify-content:center;align-items:center;padding-bottom:4px}
.caps{position:absolute;top:5px;right:6px;display:flex;gap:1px}
.cap{width:29px;height:29px;border:1px solid rgba(255,255,255,.35);border-radius:5px;background:linear-gradient(#3a7600 0 22px,rgba(232,240,226,.9) 22px)}
.cap svg{display:block}
.cap-x{border-color:#e01818;background:linear-gradient(#3a7600 0 22px,#ececec 22px)}

.qat{position:absolute;left:8px;top:13px;width:110px;height:22px;background:#fff;border-radius:0 0 6px 0;box-shadow:1px 2px 3px rgba(0,0,0,.45);display:flex;align-items:flex-start;z-index:5}
.qat-gear{width:24px;height:25px;margin:1px 0 0 6px;background:#52a818;border-radius:2px;display:flex;align-items:center;justify-content:center}
.qat-i{margin:3px 0 0 0}
.qat-gear + .qat-i{margin-left:9px}
.qat-i + .qat-i{margin-left:2px}
.qat-help{margin:0 0 0 5px;font:bold 19px/22px "Liberation Sans",sans-serif;color:#666}

.menu{height:22px;flex:none;background:linear-gradient(90deg,#dcdcdc,#e6e6e6 60%,#ececec);display:flex;align-items:center;padding-left:17px;color:#1e1e3c}
.menu span:nth-child(1){width:33px}
.menu span:nth-child(2){width:35px}
.menu span:nth-child(3){width:42px}
.menu span:nth-child(4){width:36px}
.menu span:nth-child(5){width:56px}
.menu span:nth-child(6){width:57px}
.menu span:nth-child(7){width:50px}
.menu span:nth-child(8){width:41px}
.menu span:nth-child(9){width:41px}
.menu span:nth-child(10){width:42px}
.menu span:nth-child(11){width:59px}

.tbrow{display:flex;flex:none;height:25px;background:#ececec;position:relative}
.r2{margin-top:1px}
.tbar{height:25px;display:flex;align-items:center;border-radius:4px;background:linear-gradient(#dedede,#fbfbfb 18%,#fff 50%,#e0e0e0 80%,#b4b4b4);position:relative;flex:none}
.faded .b svg{opacity:.8}
.t11{width:283px}
.t12{width:154px;margin-left:1px}
.t13{width:218px;margin-left:2px}
.t14{width:199px;margin-left:1px}
.t21{width:251px}
.t22{width:130px;margin-left:2px}
.t23{width:444px;margin-left:2px}
.t24{width:152px;margin-left:2px}
.t31{width:181px}
.t32{width:733px;margin-left:1px}
.grip{width:10px;height:18px;flex:none;background:radial-gradient(circle,#888 0 1px,transparent 1.300px) 2px 0/3px 4px repeat-y}
.g7{width:7px}.g8{width:8px}.g9{width:9px;background-position:1px 0}.g11{width:11px}.g12{width:12px}
.b{width:22px;height:24px;flex:none;display:flex;align-items:center;justify-content:center}
.b svg{width:19px;height:19px;display:block;flex:none}
.on{background:#cfe6fb;box-shadow:inset 0 0 0 1px #3d9df0}
.w5{width:5px}.w6{width:6px}.w7{width:7px}.w8{width:8px}.w9{width:9px}.w10{width:10px}.w12{width:12px}.w14{width:14px}.w20{width:20px}.w24{width:24px}.w25{width:25px}.w26{width:26px}.w27{width:27px}
.sep{height:18px;flex:none;background:linear-gradient(#c8c8c8,#c8c8c8) center/1px 100% no-repeat}
.dr{height:24px;flex:none;position:relative}
.dr::after{content:"";position:absolute;left:50%;top:11px;margin-left:-3px;border:3px solid transparent;border-top:3px solid #111;border-bottom:0}
.end{margin-left:auto;width:10px;height:25px;border-radius:0 4px 4px 0;background:linear-gradient(#c8c8c8,#d8d8d8 40%,#a8a8a8);position:relative;flex:none}
.end::before{content:"";position:absolute;left:2px;top:15px;width:6px;height:1px;background:#111}
.end::after{content:"";position:absolute;left:2px;top:17px;border:3px solid transparent;border-top:3px solid #111;border-bottom:0}
.combo{width:144px;height:18px;margin-left:3px;background:#fff;display:flex;align-items:center;justify-content:space-between;padding-left:2px;flex:none}
.combo-btn{width:10px;height:18px;background:#e4e4e4;position:relative;border:0}
.combo-btn::after{content:"";position:absolute;left:1px;top:7px;border:4px solid transparent;border-top:4px solid #111;border-bottom:0}
.big-a{font:bold 24px/24px "Liberation Serif",serif;color:#1c4fb0}

.main{flex:1;display:flex;background:#eee;min-height:0;padding-top:1px}
.leftcol{width:313px;flex:none;display:flex;flex-direction:column}
.ph{height:18px;background:#b9b9b9;color:#e9e9e9;display:flex;justify-content:space-between;align-items:center;padding-left:4px;flex:none}
.ph-on{background:linear-gradient(#44b2fb,#4ab8fd);color:#e4f4ff}
.ph-ic{width:48px;height:14px;flex:none;margin-right:5px;display:block}
.nav-pane{height:245px;flex:none;display:flex;flex-direction:column;border-bottom:1px solid #777}
.nav-tools{height:27px;flex:none;background:linear-gradient(#fff,#f4f4f4 35%,#bcbcbc);padding:4px 0 0 5px;border-left:1px solid #999;border-right:1px solid #999}
.nav-tools svg{display:block}
.tree{height:175px;flex:none;display:flex;background:#fff;border:1px solid #8a8a8a;border-width:1px 1px 0 1px;margin:0;padding-top:3px;overflow:hidden}
.tree-body{flex:1;padding-left:34px;overflow:hidden}
.tn{height:18px;display:flex;align-items:center;white-space:nowrap;color:#1a1a2a}
.g{width:20px;height:18px;flex:none;background:repeating-linear-gradient(#777 0 1px,transparent 1px 2px) 0 0/1px 100% no-repeat}
.h{width:13px;height:18px;flex:none;background:repeating-linear-gradient(#777 0 1px,transparent 1px 2px) 0 0/1px 100% no-repeat,repeating-linear-gradient(90deg,#777 0 1px,transparent 1px 2px) 0 9px/100% 1px no-repeat}
.h-end{background:repeating-linear-gradient(#777 0 1px,transparent 1px 2px) 0 0/1px 50% no-repeat,repeating-linear-gradient(90deg,#777 0 1px,transparent 1px 2px) 0 9px/100% 1px no-repeat}
.ti{width:15px;height:15px;flex:none;margin-right:6px}
.sel{background:#3a9cf0;color:#e8f4ff;outline:1px dotted #e08000;outline-offset:-1px;height:18px;line-height:18px;margin-left:-2px;padding:0 2px}
.sb-v{width:16px;flex:none;background:#fafafa;position:relative;display:flex;flex-direction:column;align-items:center}
.tree-sb{margin-right:3px;background:#fff}
.chev{position:relative;width:10px;height:10px;flex:none}
.chev::before{content:"";position:absolute;left:2.500px;width:5px;height:5px;border:solid #666;border-width:2px 0 0 2px}
.up::before{top:3px;transform:rotate(45deg)}
.dn::before{top:1px;transform:rotate(225deg)}
.lf::before{left:3px;top:2px;transform:rotate(-45deg)}
.rt::before{left:1px;top:2px;transform:rotate(135deg)}
.thumb{background:#c8c8c8;width:15px;flex:none}
.tree-sb .up{margin-top:4px}
.tree-sb .thumb{height:58px;margin-top:29px}
.tree-sb .dn{margin-top:auto;margin-bottom:6px}
.btabs{height:24px;flex:none;background:#e2e2e2;display:flex;padding-left:5px;border-left:1px solid #999;border-right:1px solid #999;color:#777}
.btab{display:flex;align-items:center;gap:2px;width:103px;padding-left:2px;padding-top:1px}
.btab svg{flex:none}
.btab-on{width:62px;background:#fff;color:#111;border:1px solid #bbb;border-top:0;border-radius:0 0 4px 4px;height:23px;gap:3px;margin-left:1px;padding-top:2px}
.prop-pane{margin-top:3px;flex:1;display:flex;flex-direction:column;min-height:0}
.props{margin-top:1px;height:348px;background:#fff;border:1px solid #808080;overflow:hidden;flex:none}
.pr{display:grid;grid-template-columns:127px 1fr;height:19px;border-bottom:1px solid #eee;align-items:center;white-space:nowrap;color:#111}
.pr>span{height:18px;line-height:18px;display:flex;align-items:center}
.pr>span:first-child{padding-left:4px;border-right:1px solid #eee}
.pr>span:last-child{padding-left:4px}
.pr>.dim{color:#aaa}
.pr-head{height:25px;border-bottom:0}
.pr-head>span{height:24px}
.pr-head>span:first-child{padding-left:6px}
.swatch{width:50px;height:17px;background:#000;border:2px solid #fff;outline:1px solid #999;outline-offset:-1px;margin-right:6px;margin-left:-2px}
.check{width:13px;height:13px;border:1px solid #333;margin-left:-3px}

.center{width:881px;margin-left:5px;flex:none;display:flex;flex-direction:column;height:610px}
.dtabs{height:21px;flex:none;display:flex;align-items:flex-end;background:#eee;border:1px solid #bbb;padding-left:3px;position:relative}
.dtab{height:19px;display:flex;margin-bottom:-1px;white-space:nowrap}
.slant{display:block;flex:none}
.dtab-t{display:flex;align-items:center}
.dtab-on .dtab-t{width:224px;background:#fff;border:1px solid #bbb;border-width:1px 1px 0 0;border-radius:0 4px 0 0;padding-left:7px;justify-content:space-between;padding-right:4px;font-size:11px}
.dtab-on .dtab-t span{-webkit-text-stroke:.35px #111}
.dtab-x{font:13px/1 "DejaVu Sans",sans-serif;font-weight:400}
.dtab-off{margin-left:2px}
.dtab-off .dtab-t{width:163px;background:#f2f2f2;border:1px solid #aaa;border-bottom:0;border-radius:4px 4px 0 0;padding-left:11px;color:#222;font-size:11px;letter-spacing:-.25px}
.dtab-menu{position:absolute;right:5px;top:7px;border:5px solid transparent;border-top:6px solid #111;border-bottom:0}
.doc{margin:0 3px;height:586px;background:#fff;border:1px solid #777;border-top:1px solid #999;display:flex;flex-direction:column;flex:none;box-shadow:0 0 0 1px #eee,0 0 0 2px #bbb}
.doc-row{height:16px;display:flex;flex:none;background:#fff;overflow:hidden}
.corner{width:16px;flex:none}
.ruler-h,.ruler-v{display:block;flex:none}
.rlabel text{font:11px "Liberation Sans",sans-serif;fill:#222}
.doc-body{flex:1;display:flex;min-height:0;background:#fff}
.view{flex:1;display:flex;flex-direction:column;min-width:0}
.scroll-row{flex:1;display:flex;min-height:0}
.hatch{width:840px;height:551px;padding:3px 0 0;flex:none;background-color:#a0a0a0;background-image:conic-gradient(#868686 25%,#b8b8b8 0 50%,#868686 0 75%,#b8b8b8 0);background-size:6px 4px}
.canvas{position:relative;width:800px;height:480px;background:#000;overflow:hidden}
.grid{display:block}
.cv-title{position:absolute;left:335px;top:14px;color:#fff;font:24px/32px "Liberation Sans",sans-serif;letter-spacing:1.500px}
.motor{position:absolute;width:40px;height:40px;border-radius:50%;background:#0f0;color:#000;font:bold 21px/42px "Liberation Sans",sans-serif;text-align:center;isolation:isolate}
.motor::before{content:"";position:absolute;left:11px;top:9px;width:10px;height:10px;border-radius:50%;background:#fff;z-index:-1}
.m1{left:360px;top:80px}.m2{left:440px;top:80px}.m3{left:340px;top:250px}.m4{left:400px;top:240px}.m5{left:680px;top:210px}
.doc-sb{background:#efefef;height:551px}
.doc-sb .up{margin-top:3px}
.doc-sb .thumb{height:17px;margin-top:303px}
.doc-sb .dn{margin-top:auto;margin-bottom:3px}
.sb-h{height:17px;flex:none;background:#efefef;display:flex;align-items:center;padding:0 19px 0 3px;position:relative}
.sb-h .thumb{width:17px;height:15px;margin-left:442px}
.sb-h .rt{margin-left:auto}

.chest{width:152px;margin-left:5px;flex:none;display:flex;flex-direction:column;height:610px}
.chest .ph{height:17px;color:#ddd}
.chest-body{margin-top:2px;height:591px;flex:none;border:1px solid #777;border-right:0;display:flex;background:#fff}
.folder{width:23px;flex:none;background:#d4d4d4;position:relative}
.folder-shape{display:block;position:absolute;left:0;top:0}
.folder-t{position:absolute;left:3px;top:37px;width:18px;writing-mode:vertical-rl;color:#6e6e6e;white-space:nowrap;line-height:18px}
.chest-main{flex:1;display:flex;flex-direction:column;min-width:0}
.set-row{height:20px;flex:none;display:flex;background:#fff}
.set-name{width:108px;background:#efefef;border-bottom:2px solid #666;padding-left:3px;line-height:17px;flex:none}
.set-btn{width:18px;height:18px;margin-left:1px;background:#c4c4c4;display:flex;align-items:center;justify-content:center;flex:none}
.set-btn svg{display:block}
.chest-list{flex:1;display:flex;min-height:0;overflow:hidden}
.items{width:111px;flex:none;background:#ffdcd9;overflow:hidden;padding:3px 33px 0 0}
.it{height:75px;display:flex;flex-direction:column;align-items:center;position:relative;color:#222}
.ib{width:32px;height:32px;display:block;flex:none}
.it figcaption{margin-top:3px;line-height:16px;white-space:nowrap}
.ack{position:absolute;left:23px;top:8px;width:32px;text-align:center;color:#fff;font:bold 16px/20px "Liberation Mono",monospace;letter-spacing:-2px}
.chest-sb{width:16px;background:#f0f0f0}
.chest-sb .up{margin-top:2px}
.chest-sb .thumb{height:141px;margin-top:5px}
.chest-sb .dn{margin-top:auto;margin-bottom:4px}

.status{height:18px;flex:none;background:#efefef;border-top:1px solid #aaa;display:flex;align-items:center;color:#222}
.st-help{width:948px;flex:none;padding:2px 0 0 3px}
.st{height:17px;line-height:19px;text-align:center;border-left:1px solid #ddd;flex:none}
.st-a{width:152px}
.st-b{width:151px}
.st-off{color:#999;width:26px}
.st-on{width:31px;color:#222}
.st-scrl{width:32px}
.st-grip{width:16px;height:16px;background:radial-gradient(circle,#bbb 0 1px,transparent 1.200px) 0 0/4px 4px}
```
